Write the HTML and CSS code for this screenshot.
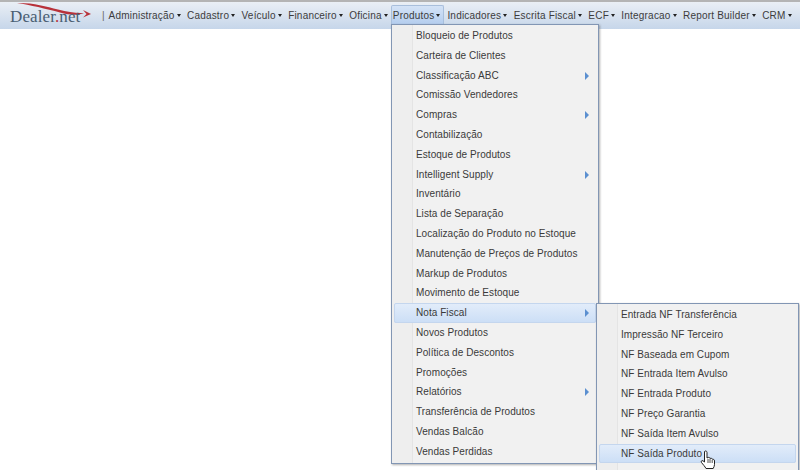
FILE: index.html
```html
<!DOCTYPE html>
<html lang="pt-BR">
<head>
  <meta charset="UTF-8" />
  <title>Dealer.net</title>
  <link rel="stylesheet" href="styles.css">
</head>
<body>
  <div class="topbar">
    <div class="logo">
      <svg class="logo-swoosh" width="94" height="20" viewBox="0 0 94 20">
        <path d="M17 1 C32 0.500 46 4.500 58 7.500 C68 10 76 11.500 84 11 C78 13.500 70 13.300 60 10.500 C46 6.800 30 3 17 1 Z" fill="#b8323a" />
        <path d="M83 8 L91 12 L83 15.500 L86.500 12 Z" fill="#b8323a" />
      </svg>
      <span class="logo-text">Dealer<span class="logo-dot">.</span>net</span>
    </div>
    <span class="sep">|</span>
    <ul class="nav">
      <li>Administração<i class="caret"></i></li>
      <li>Cadastro<i class="caret"></i></li>
      <li>Veículo<i class="caret"></i></li>
      <li>Financeiro<i class="caret"></i></li>
      <li>Oficina<i class="caret"></i></li>
      <li class="active">Produtos<i class="caret"></i></li>
      <li>Indicadores<i class="caret"></i></li>
      <li>Escrita Fiscal<i class="caret"></i></li>
      <li>ECF<i class="caret"></i></li>
      <li>Integracao<i class="caret"></i></li>
      <li>Report Builder<i class="caret"></i></li>
      <li>CRM<i class="caret"></i></li>
    </ul>
  </div>

  <ul class="menu menu-produtos">
    <li>Bloqueio de Produtos</li>
    <li>Carteira de Clientes</li>
    <li class="sub">Classificação ABC</li>
    <li>Comissão Vendedores</li>
    <li class="sub">Compras</li>
    <li>Contabilização</li>
    <li>Estoque de Produtos</li>
    <li class="sub">Intelligent Supply</li>
    <li>Inventário</li>
    <li>Lista de Separação</li>
    <li>Localização do Produto no Estoque</li>
    <li>Manutenção de Preços de Produtos</li>
    <li>Markup de Produtos</li>
    <li>Movimento de Estoque</li>
    <li class="sub hover">Nota Fiscal</li>
    <li>Novos Produtos</li>
    <li>Política de Descontos</li>
    <li>Promoções</li>
    <li class="sub">Relatórios</li>
    <li>Transferência de Produtos</li>
    <li>Vendas Balcão</li>
    <li>Vendas Perdidas</li>
  </ul>

  <ul class="menu menu-nf">
    <li>Entrada NF Transferência</li>
    <li>Impressão NF Terceiro</li>
    <li>NF Baseada em Cupom</li>
    <li>NF Entrada Item Avulso</li>
    <li>NF Entrada Produto</li>
    <li>NF Preço Garantia</li>
    <li>NF Saída Item Avulso</li>
    <li class="hover">NF Saída Produto</li>
  </ul>

  <svg class="cursor" width="16" height="20" viewBox="0 0 16 20">
    <path d="M4.500 1.500 C5.500 .5 7 1 7 2.500 V8 L8 7.500 C9 7.200 10 7.500 10 8.500 C11 8 12 8.300 12.200 9.200 C13.200 8.900 14.500 9.500 14.500 11 V14.500 C14.500 16 13.800 17.200 13.200 18.500 H6 C5 16.500 3 14.500 1.500 12.500 C.8 11.500 1.500 10 3 10.800 L4.500 12 Z" fill="#fff" stroke="#222" stroke-width="1" stroke-linejoin="round" />
    <path d="M8 9 V13 M10 9 V13 M12.200 10 V13" stroke="#222" stroke-width=".8" fill="none" />
  </svg>
</body>
</html>
```

FILE: styles.css
```css
body {
  margin: 0;
  width: 800px;
  height: 470px;
  overflow: hidden;
  position: relative;
  background: #fff;
  font-family: 'Liberation Sans', Arial, sans-serif;
  font-size: 10px;
  color: #3a3a3a;
}
ul {
  list-style: none;
  margin: 0;
  padding: 0;
}
.topbar {
  display: flex;
  align-items: flex-start;
  height: 27px;
  padding-left: 10px;
  border-top: 2px solid #b4b4b4;
  background: linear-gradient(to bottom, #eaeff5, #c6d6ea);
}
.logo {
  position: relative;
  width: 92px;
  height: 27px;
}
.logo-swoosh {
  position: absolute;
  left: -10px;
  top: 0;
}
.logo-text {
  position: absolute;
  left: 0;
  top: 5px;
  font-family: 'Liberation Serif', serif;
  font-size: 17px;
  letter-spacing: .1px;
  color: #4a5d72;
  white-space: nowrap;
}
.logo-dot {
  color: #b8323a;
}
.sep {
  margin-top: 7px;
  color: #666;
  line-height: 13px;
}
.nav {
  display: flex;
  margin-left: 2px;
}
.nav li {
  display: flex;
  align-items: center;
  height: 20px;
  margin-top: 3px;
  margin-right: 2.400px;
  padding: 0 2px;
  white-space: nowrap;
  color: #3c3c3c;
  letter-spacing: .2px;
}
.nav li.active {
  height: 18px;
  margin-left: -1.400px;
  margin-right: 1px;
  background: linear-gradient(to bottom, #d4e3f7, #b4cdee);
  border: 1px solid #a8bfdc;
  border-bottom: none;
  padding: 0 3px 0 1px;
  border-radius: 2px 2px 0 0;
}
.caret {
  margin-left: 2px;
  margin-top: 1px;
  border-left: 2.500px solid transparent;
  border-right: 2.500px solid transparent;
  border-top: 3px solid #222;
}
.menu {
  position: absolute;
  box-sizing: border-box;
  padding: 1px 2px 2px;
  background: linear-gradient(to right, #eeeeee 20px, #e4e4e4 20px, #e4e4e4 21px, #f1f1f1 21px);
  border: 1px solid #8296b4;
  box-shadow: 1px 1px 2px rgba(80, 80, 80, .45);
  letter-spacing: .06px;
}
.menu-produtos {
  left: 391px;
  top: 24px;
  width: 208px;
  height: 440px;
}
.menu-nf {
  left: 596px;
  top: 303px;
  width: 203px;
  height: 180px;
}
.menu li {
  position: relative;
  box-sizing: border-box;
  height: 19.800px;
  line-height: 19px;
  padding-left: 22px;
  white-space: nowrap;
}
.menu li.sub::after {
  content: "";
  position: absolute;
  right: 7px;
  top: 6px;
  border-left: 4px solid #5b8fd0;
  border-top: 4px solid transparent;
  border-bottom: 4px solid transparent;
}
.menu li.hover {
  background: linear-gradient(to bottom, #e3edfa, #cbdef6);
  outline: 1px solid #c4d6ee;
  outline-offset: -1px;
  border-radius: 2px;
}
.cursor {
  position: absolute;
  left: 700px;
  top: 450px;
}
```
